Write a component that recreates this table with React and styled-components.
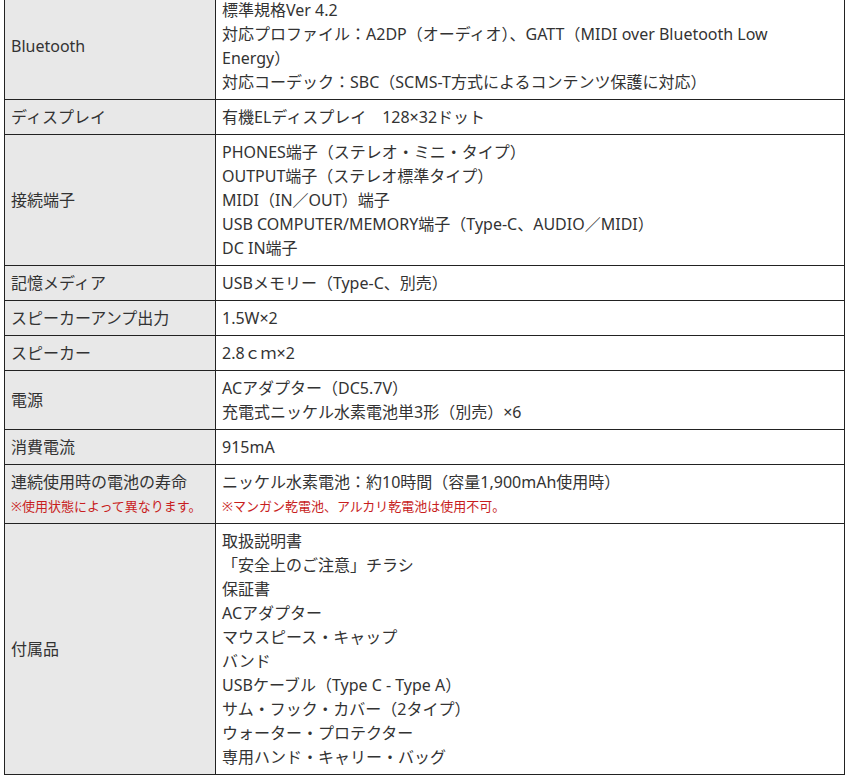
import React from "react";
import styled, { createGlobalStyle } from "styled-components";

const GlobalStyle = createGlobalStyle`
  html, body {
    margin: 0;
    padding: 0;
    background: #fff;
  }
  body {
    font-family: "Noto Sans", "Noto Sans CJK JP", sans-serif;
    color: #333;
  }
`;

const Page = styled.div`
  padding: 0 6px 0 4px;
  margin-top: -8px;
`;

const SpecTable = styled.table`
  width: 841px;
  border-collapse: collapse;
  table-layout: fixed;
  font-size: 16px;
  line-height: 24px;
`;

const Label = styled.th`
  width: 198px;
  background: #e8e8e8;
  border: 1px solid #222;
  padding: 5px 6px;
  text-align: left;
  font-weight: normal;
  vertical-align: middle;
`;

const Value = styled.td`
  background: #fff;
  border: 1px solid #222;
  padding: 5px 6px;
  vertical-align: middle;
`;

const Line = styled.div`
  white-space: nowrap;
  height: 24px;
`;

const Note = styled.div`
  color: #c81e1e;
  font-size: 13px;
  line-height: 24px;
  white-space: nowrap;
`;

const specs = [
  {
    label: "Bluetooth",
    lines: [
      "標準規格Ver 4.2",
      "対応プロファイル：A2DP（オーディオ）、GATT（MIDI over Bluetooth Low",
      "Energy）",
      "対応コーデック：SBC（SCMS-T方式によるコンテンツ保護に対応）",
    ],
  },
  { label: "ディスプレイ", lines: ["有機ELディスプレイ　128×32ドット"] },
  {
    label: "接続端子",
    lines: [
      "PHONES端子（ステレオ・ミニ・タイプ）",
      "OUTPUT端子（ステレオ標準タイプ）",
      "MIDI（IN／OUT）端子",
      "USB COMPUTER/MEMORY端子（Type-C、AUDIO／MIDI）",
      "DC IN端子",
    ],
  },
  { label: "記憶メディア", lines: ["USBメモリー（Type-C、別売）"] },
  { label: "スピーカーアンプ出力", lines: ["1.5W×2"] },
  { label: "スピーカー", lines: ["2.8ｃｍ×2"] },
  {
    label: "電源",
    lines: ["ACアダプター（DC5.7V）", "充電式ニッケル水素電池単3形（別売）×6"],
  },
  { label: "消費電流", lines: ["915mA"] },
  {
    label: "連続使用時の電池の寿命",
    labelNote: "※使用状態によって異なります。",
    lines: ["ニッケル水素電池：約10時間（容量1,900mAh使用時）"],
    note: "※マンガン乾電池、アルカリ乾電池は使用不可。",
  },
  {
    label: "付属品",
    lines: [
      "取扱説明書",
      "「安全上のご注意」チラシ",
      "保証書",
      "ACアダプター",
      "マウスピース・キャップ",
      "バンド",
      "USBケーブル（Type C - Type A）",
      "サム・フック・カバー（2タイプ）",
      "ウォーター・プロテクター",
      "専用ハンド・キャリー・バッグ",
    ],
  },
];

const App = () => {
  return (
    <Page>
      <GlobalStyle />
      <SpecTable>
        <tbody>
          {specs.map((s) => (
            <tr key={s.label}>
              <Label>
                <Line>{s.label}</Line>
                {s.labelNote && <Note>{s.labelNote}</Note>}
              </Label>
              <Value>
                {s.lines.map((l, i) => (
                  <Line key={i}>{l}</Line>
                ))}
                {s.note && <Note>{s.note}</Note>}
              </Value>
            </tr>
          ))}
        </tbody>
      </SpecTable>
    </Page>
  );
};

export default App;
